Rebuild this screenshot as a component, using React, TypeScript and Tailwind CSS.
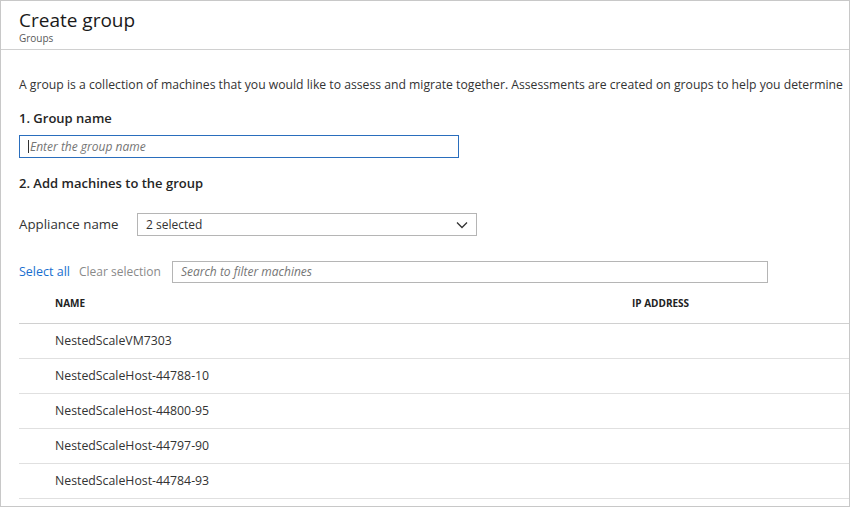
const machines = [
  "NestedScaleVM7303",
  "NestedScaleHost-44788-10",
  "NestedScaleHost-44800-95",
  "NestedScaleHost-44797-90",
  "NestedScaleHost-44784-93",
];

function Chevron() {
  return (
    <svg width="12" height="8" viewBox="0 0 12 8" fill="none">
      <path d="M1 1.5l5 5 5-5" stroke="#333" strokeWidth="1.3" />
    </svg>
  );
}

export default function App() {
  return (
    <div className="h-[507px] w-[850px] overflow-hidden bg-white font-['Segoe_UI','Open_Sans',sans-serif] text-[#252525]">
      <div className="h-full w-full overflow-hidden border border-[#c8c8c8]">
        <header className="h-[49px] border-b border-[#d0d0d0] pl-[18px] pt-[7px]">
          <h1 className="text-[19px] leading-[24px] text-[#1a1a1a]">Create group</h1>
          <p className="mt-[1px] text-[10px] leading-[11px] text-[#595959]">Groups</p>
        </header>

        <main className="pl-[18px]">
          <p className="mt-[26px] whitespace-nowrap text-[12.2px] leading-[18px] text-[#333]">
            A group is a collection of machines that you would like to assess and migrate together. Assessments are created on groups to help you determine
          </p>

          <h2 className="mt-[15px] text-[13px] font-semibold leading-[18px]">1. Group name</h2>
          <div className="mt-[8px] flex h-[23px] w-[440px] items-center border border-[#2a6ebd] px-[8px]">
            <span className="mr-[1px] h-[13px] w-px bg-[#333]" />
            <span className="text-[12px] italic text-[#757575]">Enter the group name</span>
          </div>

          <h2 className="mt-[16px] text-[13px] font-semibold leading-[18px]">2. Add machines to the group</h2>

          <div className="mt-[21px] flex items-center">
            <span className="w-[118px] text-[13.3px] text-[#333]">Appliance name</span>
            <div className="flex h-[23px] w-[340px] items-center justify-between border border-[#b5b5b5] pl-[8px] pr-[8px]">
              <span className="text-[12px] text-[#333]">2 selected</span>
              <Chevron />
            </div>
          </div>

          <div className="mt-[25px] flex items-center">
            <button className="text-[12.5px] text-[#1a6fcf]">Select all</button>
            <button className="ml-[9px] text-[12px] text-[#8a8a8a]">Clear selection</button>
            <div className="ml-[11px] flex h-[22px] w-[596px] items-center border border-[#b5b5b5] px-[8px]">
              <span className="text-[12px] italic text-[#757575]">Search to filter machines</span>
            </div>
          </div>

          <div className="mt-[10px] flex h-[31px] items-center border-b border-[#d0d0d0] pb-[10px] text-[10px] font-bold text-[#222]">
            <span className="w-[613px] pl-[36px]">NAME</span>
            <span>IP ADDRESS</span>
          </div>

          {machines.map((m) => (
            <div key={m} className="flex h-[35px] items-center border-b border-[#e0e0e0] pl-[36px] text-[12.3px] text-[#333]">
              {m}
            </div>
          ))}
        </main>
      </div>
    </div>
  );
}
